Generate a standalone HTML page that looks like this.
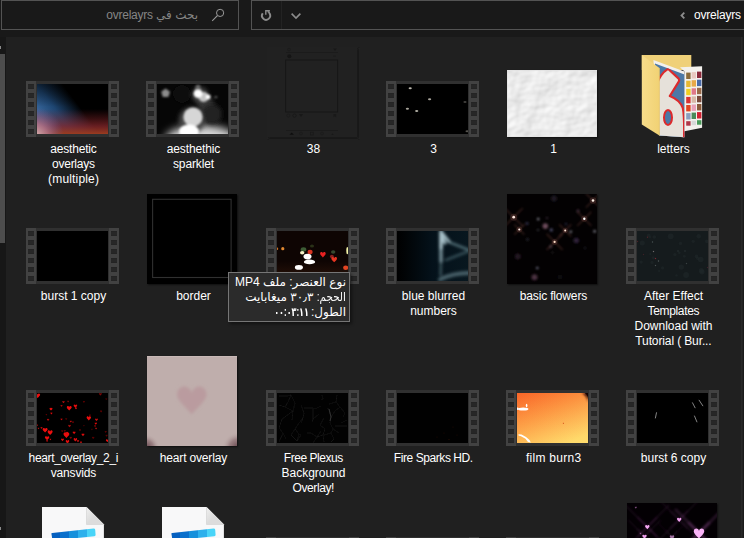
<!DOCTYPE html>
<html lang="ar"><head><meta charset="utf-8"><title>ovrelayrs</title>
<style>
html,body{margin:0;padding:0}
body{width:744px;height:538px;overflow:hidden;background:#191919;position:relative;font-family:"Liberation Sans","DejaVu Sans",sans-serif;font-size:12px;color:#fff}
#content{position:absolute;left:0;top:37px;width:744px;height:501px;background:#202020}
#strip{position:absolute;left:0;top:37px;width:6px;height:501px;background:#171717}
#thumb{position:absolute;left:0;top:54px;width:5px;height:189px;background:#4d4d4d}
.abs{position:absolute;display:block}
.box{position:absolute;box-sizing:border-box;border:1px solid #535353;background:#191919;height:30px;top:0}
.film{position:absolute;width:93px;height:56px;background:#303030}
.film::before,.film::after{content:"";position:absolute;top:0;width:10px;height:56px;
 background:linear-gradient(to bottom,#212121 0,#272727 1px,#272727 4px,#212121 5px,transparent 5px,transparent 9px) 2px 3px/6px 9px repeat-y,#424242}
.film::before{left:0}.film::after{right:0}
.pic{position:absolute;left:11px;top:3px;width:71px;height:50px;background:#000;overflow:hidden}
.pic svg,.sq svg{display:block}
.lbl{position:absolute;text-align:center;line-height:15px;font-size:12px;color:#fff;white-space:nowrap}
.sq{position:absolute;overflow:hidden;box-shadow:1px 1px 1.5px rgba(0,0,0,.55)}
#tip{position:absolute;left:228px;top:272px;width:122px;height:50px;box-sizing:border-box;border:1px solid #767676;background:#2b2b2b;color:#fff;direction:rtl;text-align:right;font-size:12px;line-height:15px;padding:2px 3px 0 0;white-space:nowrap;box-shadow:2px 2px 3px rgba(0,0,0,.45)}
#tip span{display:inline-block;transform-origin:100% 50%}
</style></head><body>
<div class="box" style="left:1px;width:238px"></div>
<div class="box" style="left:251px;width:500px"></div>
<div id="content"></div><div id="strip"></div><div id="thumb"></div>
<div class="abs" style="left:741px;top:37px;width:1px;height:501px;background:#282828"></div><div class="abs" style="left:742px;top:37px;width:1px;height:501px;background:#232323"></div><div class="abs" style="left:743px;top:37px;width:1px;height:501px;background:#1a1a1a"></div>
<div class="abs" style="left:0;top:46px;width:1px;height:3px;background:#8a8a8a"></div>
<div class="abs" style="left:0;top:527px;width:1px;height:3px;background:#8a8a8a"></div>
<div class="abs" style="left:106px;top:7px;width:92px;height:16px;line-height:16px;font-size:12px;color:#858585;direction:rtl;text-align:right;white-space:nowrap">بحث في <span style="letter-spacing:-.25px">ovrelayrs</span></div>
<svg class="abs" style="left:208px;top:6px" width="20" height="20" viewBox="0 0 20 20"><circle cx="12.1" cy="6.9" r="3.6" fill="none" stroke="#9a9a9a" stroke-width="1"/><path d="M9.4 9.6 L4.2 14.8" stroke="#9a9a9a" stroke-width="1.1" fill="none"/></svg>
<div class="abs" style="left:281px;top:1px;width:1px;height:28px;background:#232323"></div>
<svg class="abs" style="left:256px;top:6px" width="20" height="20" viewBox="0 0 20 20"><g fill="none" stroke="#8c8c8c"><path d="M11.6 5.6 Q13.2 5.6 13.6 7.6 A4.1 4.1 0 1 1 6.7 7.3" stroke-width="1.9"/><path d="M9.8 8.8 V4.7 H13.9" stroke-width="1.4"/></g></svg>
<svg class="abs" style="left:288px;top:8px" width="16" height="16" viewBox="0 0 16 16"><path d="M3.6 5.6 L8 10 L12.4 5.6" fill="none" stroke="#8c8c8c" stroke-width="1.6"/></svg>
<svg class="abs" style="left:676px;top:8px" width="14" height="16" viewBox="0 0 14 16"><path d="M8.3 4.7 L5.5 7.5 L8.3 10.3" fill="none" stroke="#8c8c8c" stroke-width="1.8"/></svg>
<div class="abs" style="left:694px;top:7px;height:16px;line-height:16px;font-size:12px;color:#fff;white-space:nowrap;letter-spacing:-.2px">ovrelayrs</div>
<div class="film" style="left:26px;top:81px"><div class="pic"><svg width="71" height="50" viewBox="0 0 71 50"><defs><linearGradient id="a1" gradientUnits="userSpaceOnUse" x1="-4" y1="24" x2="26" y2="1"><stop offset="0" stop-color="#3a6aa0"/><stop offset=".45" stop-color="#1e4672"/><stop offset="1" stop-color="#000"/></linearGradient>
<linearGradient id="a2" x1="0" y1="0" x2="0" y2="1"><stop offset=".5" stop-color="#701c20" stop-opacity="0"/><stop offset=".84" stop-color="#84262a" stop-opacity=".78"/><stop offset="1" stop-color="#9a3c20"/></linearGradient>
<radialGradient id="a3" gradientUnits="userSpaceOnUse" cx="-3" cy="53" r="30"><stop offset="0" stop-color="#e0c4bc"/><stop offset=".45" stop-color="#b88098" stop-opacity=".75"/><stop offset="1" stop-color="#6a5a96" stop-opacity="0"/></radialGradient>
<linearGradient id="a4" x1="0" y1="0" x2="0" y2="1"><stop offset="0" stop-color="#000" stop-opacity=".5"/><stop offset=".45" stop-color="#000" stop-opacity="0"/></linearGradient></defs><rect width="71" height="50" fill="#000"/><rect width="71" height="50" fill="url(#a1)"/><rect width="71" height="50" fill="url(#a4)"/><rect width="71" height="50" fill="url(#a2)"/><rect width="71" height="50" fill="url(#a3)"/></svg></div></div>
<div class="lbl" style="left:14.5px;top:142px;width:118px"><span style="letter-spacing:-0.16px;margin-right:0.16px">aesthetic</span><br><span style="letter-spacing:-0.26px;margin-right:0.26px">overlays</span><br><span style="letter-spacing:0.17px;margin-right:-0.17px">(multiple)</span></div>
<div class="film" style="left:146px;top:81px"><div class="pic"><svg width="71" height="50" viewBox="0 0 71 50"><defs><filter id="b1" x="-20%" y="-20%" width="140%" height="140%"><feGaussianBlur stdDeviation=".9"/></filter><filter id="b2" x="-30%" y="-60%" width="160%" height="220%"><feGaussianBlur stdDeviation="4.5"/></filter><filter id="b3" x="-40%" y="-40%" width="180%" height="180%"><feGaussianBlur stdDeviation="2.2"/></filter></defs><rect width="71" height="50" fill="#060606"/>
<ellipse cx="44" cy="56" rx="36" ry="15" fill="#d8d8d8" filter="url(#b2)"/>
<circle cx="25" cy="10" r="9" fill="#0b0b0b" filter="url(#b1)"/>
<circle cx="48.7" cy="20" r="8" fill="#343434" filter="url(#b3)"/>
<g filter="url(#b3)"><circle cx="43" cy="11" r="8" fill="#444"/><circle cx="35" cy="36" r="13" fill="#484848"/><circle cx="55" cy="30" r="10" fill="#242424"/></g>
<g filter="url(#b1)"><path d="M8.6 4.6 L13 7.8 L11.4 13 L5.8 13 L4.2 7.8Z" fill="#8c8c8c"/>
<circle cx="36" cy="33" r="9.6" fill="#d6d6d6"/>
<circle cx="46.6" cy="13" r="5" fill="#c4c4c4"/><circle cx="41" cy="9.5" r="4.4" fill="#fff"/><circle cx="51.2" cy="13" r="2.4" fill="#fff"/><circle cx="41" cy="3.4" r="2.6" fill="#6a6a6a"/>
<ellipse cx="32" cy="47.5" rx="10" ry="7" fill="#fff"/><rect x="57.6" y="12.6" width="2.6" height="1" fill="#bbb"/></g></svg></div></div>
<div class="lbl" style="left:134.5px;top:142px;width:118px"><span style="letter-spacing:-0.13px;margin-right:0.13px">aesthethic</span><br><span style="letter-spacing:-0.14px;margin-right:0.14px">sparklet</span></div>
<div class="sq" style="left:267px;top:47px;width:90px;height:90px;overflow:visible;box-shadow:none"><svg width="93" height="93" viewBox="0 0 93 93"><defs><filter id="s1"><feGaussianBlur stdDeviation=".8"/></filter></defs><rect x="1.2" y="1.2" width="90.6" height="90.6" fill="#191919" filter="url(#s1)"/><rect width="90" height="90" fill="#212121"/>
<rect x="18.6" y="13" width="52" height="52" fill="none" stroke="#171717" stroke-width="1"/>
<path d="M19 5.5H71M19 83.5H71" stroke="#1b1b1b" stroke-width="1"/>
<circle cx="22.3" cy="9.2" r="2" fill="#151515"/><circle cx="22" cy="2.6" r="1.4" fill="none" stroke="#1b1b1b" stroke-width=".8"/><path d="M66 1.5h4l-2 2.6z" fill="#191919"/><path d="M66 9.2h3" stroke="#1c1c1c"/>
<circle cx="21.3" cy="68.6" r="1.6" fill="none" stroke="#1a1a1a" stroke-width=".8"/><circle cx="27.5" cy="68.6" r="1.7" fill="none" stroke="#171717" stroke-width=".9"/><path d="M32 67h4l-2 3z" fill="#181818"/><path d="M66.5 67h2.6v3.2l-1.3-1-1.3 1z" fill="#191919"/>
<path d="M22.5 87.8l2.2-2.4 2.2 2.4z" fill="#0e0e0e"/><circle cx="34" cy="86.5" r="1.4" fill="none" stroke="#1a1a1a" stroke-width=".8"/><rect x="43.5" y="85.2" width="2.8" height="2.8" fill="none" stroke="#1a1a1a" stroke-width=".8"/><circle cx="55" cy="86.5" r="1.4" fill="none" stroke="#1a1a1a" stroke-width=".8"/><path d="M64.4 88q1.1-3 2.2 0z" fill="#181818"/></svg></div>
<div class="lbl" style="left:254.5px;top:142px;width:118px">38</div>
<div class="film" style="left:386px;top:81px"><div class="pic"><svg width="71" height="50" viewBox="0 0 71 50"><defs><filter id="c1"><feGaussianBlur stdDeviation=".45"/></filter></defs><rect width="71" height="50" fill="#000"/><g filter="url(#c1)"><ellipse cx="13.2" cy="4.3" rx="1.6" ry="1" fill="#bcb8ae" opacity="1"/><ellipse cx="32.6" cy="15.2" rx="1.6" ry="1" fill="#bcb8ae" opacity="0.9"/><ellipse cx="10.4" cy="24.7" rx="1.6" ry="1" fill="#bcb8ae" opacity="0.9"/><ellipse cx="19.7" cy="26.9" rx="1.6" ry="1" fill="#bcb8ae" opacity="0.95"/><ellipse cx="68" cy="17.9" rx="1.6" ry="1" fill="#bcb8ae" opacity="0.35"/><ellipse cx="70.1" cy="47.3" rx="1.6" ry="1" fill="#bcb8ae" opacity="0.45"/></g></svg></div></div>
<div class="lbl" style="left:374.5px;top:142px;width:118px">3</div>
<div class="sq" style="left:507px;top:70px;width:90px;height:67px;"><svg width="90" height="67" viewBox="0 0 90 67"><defs><filter id="p1" x="0" y="0" width="100%" height="100%" color-interpolation-filters="sRGB"><feTurbulence type="fractalNoise" baseFrequency=".045 .055" numOctaves="3" seed="7" result="n"/><feDiffuseLighting in="n" lighting-color="#fff" surfaceScale="1.0" diffuseConstant="1.035"><feDistantLight azimuth="225" elevation="63"/></feDiffuseLighting></filter></defs><rect width="90" height="67" fill="#ececec"/><rect width="90" height="67" filter="url(#p1)"/>
<rect x="0" y="0" width="90" height="67" fill="none" stroke="#dedede" stroke-width="1"/></svg></div>
<div class="lbl" style="left:494.5px;top:142px;width:118px">1</div>
<svg class="abs" style="left:638px;top:50px" width="70" height="92" viewBox="0 0 70 92"><defs><linearGradient id="fg1" x1="0" y1="0" x2="1" y2="0"><stop offset="0" stop-color="#f7dc8a"/><stop offset="1" stop-color="#f1d274"/></linearGradient><filter id="fb"><feGaussianBlur stdDeviation=".5"/></filter><clipPath id="fc"><path d="M17 13.4 L46.5 24.6 V87.2 L21.4 85.5Z"/></clipPath></defs>
<path d="M3.8 5.1H53.3V20H3.8Z" fill="#efd078"/>
<path d="M15.4 9.9 L46.5 21.4 V87.2 L21.4 85.5Z" fill="#f2f0ee"/>
<path d="M17 13.4 L46.5 24.6 V87.2 L21.4 85.5Z" fill="#4c78a6"/>
<g clip-path="url(#fc)"><path d="M19 34 Q22 24 30 18.8 L40.4 28.4 Q41.8 30 40.6 31.8 L31.8 46 Q42 50 44.8 58 Q46.6 66 46 92 L19 92Z" fill="#e6e1da" stroke="#dc2a2c" stroke-width="2.2" stroke-linejoin="round"/>
<ellipse cx="30" cy="67.5" rx="4" ry="7.4" fill="#4c78a6" stroke="#dc2a2c" stroke-width="2"/></g>
<path d="M42 17.2 L64.1 16.2 V77.8 L46.5 81.2 V21.4Z" fill="#f3f1ed"/>
<g filter="url(#fb)"><rect x="48.2" y="22.6" width="4.4" height="6.4" fill="#8a6a3a"/><rect x="53.6" y="22.1" width="4.4" height="6.4" fill="#e8c8c0"/><rect x="59.0" y="21.6" width="4.4" height="6.4" fill="#8a2a3a"/><rect x="48.2" y="30.7" width="4.4" height="6.4" fill="#e8b830"/><rect x="53.6" y="30.2" width="4.4" height="6.4" fill="#e8a848"/><rect x="59.0" y="29.7" width="4.4" height="6.4" fill="#4a6aa8"/><rect x="48.2" y="38.8" width="4.4" height="6.4" fill="#f0d020"/><rect x="53.6" y="38.3" width="4.4" height="6.4" fill="#e07888"/><rect x="59.0" y="37.8" width="4.4" height="6.4" fill="#9a6a4a"/><rect x="48.2" y="46.9" width="4.4" height="6.4" fill="#d83030"/><rect x="53.6" y="46.4" width="4.4" height="6.4" fill="#d8b8a8"/><rect x="59.0" y="45.9" width="4.4" height="6.4" fill="#7a4a3a"/><rect x="48.2" y="55.0" width="4.4" height="6.4" fill="#e04420"/><rect x="53.6" y="54.5" width="4.4" height="6.4" fill="#e8a0b8"/><rect x="59.0" y="54.0" width="4.4" height="6.4" fill="#8a5a3a"/><rect x="48.2" y="63.1" width="4.4" height="6.4" fill="#8aa0c0"/><rect x="53.6" y="62.6" width="4.4" height="6.4" fill="#4a8a5a"/><rect x="59.0" y="62.1" width="4.4" height="6.4" fill="#d02030"/><rect x="48.2" y="71.2" width="4.4" height="4.5" fill="#b03848"/><rect x="53.6" y="70.7" width="4.4" height="4.5" fill="#d8d8d8"/><rect x="59.0" y="70.2" width="4.4" height="4.5" fill="#4a9a5a"/></g>
<path d="M3.8 5.1 L21.4 18 V85.5 L3.8 74.4Z" fill="url(#fg1)"/><path d="M21.4 18V85.5" stroke="#e4c468" stroke-width=".7"/></svg>
<div class="lbl" style="left:614.5px;top:142px;width:118px">letters</div>
<div class="film" style="left:26px;top:228px"><div class="pic"><svg width="71" height="50" viewBox="0 0 71 50"><rect width="71" height="50" fill="#000"/></svg></div></div>
<div class="lbl" style="left:14.5px;top:289px;width:118px">burst 1 copy</div>
<div class="sq" style="left:147px;top:194px;width:90px;height:90px;"><svg width="90" height="90" viewBox="0 0 90 90"><rect width="90" height="90" fill="#000"/><rect x="5.6" y="5.3" width="78.5" height="78.2" fill="none" stroke="#303030" stroke-width="1.1"/></svg></div>
<div class="lbl" style="left:134.5px;top:289px;width:118px">border</div>
<div class="film" style="left:266px;top:228px"><div class="pic"><svg width="71" height="50" viewBox="0 0 71 50"><defs><filter id="k1"><feGaussianBlur stdDeviation=".75"/></filter><linearGradient id="k2" x1="0" y1="0" x2="0" y2="1"><stop offset="0" stop-color="#2a1208" stop-opacity="0"/><stop offset="1" stop-color="#2e160a"/></linearGradient></defs><rect width="71" height="50" fill="#0e0503"/><rect y="30" width="71" height="20" fill="url(#k2)"/><g filter="url(#k1)"><ellipse cx="5.8" cy="17.7" rx="1.6" ry="1.6" fill="#e08830"/><ellipse cx="0.2" cy="17.7" rx="1" ry="1.2" fill="#d07020"/><ellipse cx="26.5" cy="18.4" rx="2.8" ry="2.2" fill="#3c5c34"/><ellipse cx="25.2" cy="21.7" rx="2.2" ry="1.8" fill="#f4f4c8"/><ellipse cx="33.1" cy="21" rx="2.6" ry="2.2" fill="#d83424"/><ellipse cx="30.5" cy="25.6" rx="4" ry="2.8" fill="#fff"/><ellipse cx="32.5" cy="30.9" rx="5.6" ry="2.4" fill="#fff"/><ellipse cx="21.9" cy="36.4" rx="4" ry="2.4" fill="#fff"/><ellipse cx="56.2" cy="21" rx="2.2" ry="1.8" fill="#36482f"/><ellipse cx="54.9" cy="25.6" rx="2" ry="1.8" fill="#8c2020"/><ellipse cx="70.3" cy="19.7" rx="1" ry="3.6" fill="#f4f4a8"/><ellipse cx="68.7" cy="36.8" rx="2.6" ry="2.2" fill="#e44422"/><ellipse cx="35" cy="15" rx="2" ry="1.6" fill="#2a3018"/><path d="M45.9 26.4 C44.5 24.9 42.8 23.5 43.1 22.3 C43.4 20.7 45.5 20.7 45.9 22.3 C46.3 20.7 48.4 20.7 48.7 22.3 C49.0 23.5 47.3 24.9 45.9 26.4Z" fill="#e82020"/><path d="M57.2 31.3 C55.8 29.8 54.1 28.4 54.4 27.2 C54.7 25.6 56.8 25.6 57.2 27.2 C57.6 25.6 59.7 25.6 60.0 27.2 C60.3 28.4 58.6 29.8 57.2 31.3Z" fill="#e83420"/></g></svg></div></div>
<div class="film" style="left:386px;top:228px"><div class="pic"><svg width="71" height="50" viewBox="0 0 71 50"><defs><filter id="u1" x="-20%" y="-20%" width="140%" height="140%"><feGaussianBlur stdDeviation="1.4"/></filter><linearGradient id="u2" x1="0" y1="0" x2="1" y2="0"><stop offset="0" stop-color="#000"/><stop offset=".12" stop-color="#010406"/><stop offset=".5" stop-color="#04111a"/><stop offset="1" stop-color="#08171f"/></linearGradient></defs><rect width="71" height="50" fill="url(#u2)"/><g filter="url(#u1)" fill="none" stroke-linecap="round">
<path d="M72 19 L53 11.5" stroke="#5a7880" stroke-width="2.4"/><path d="M72 20 L49 29" stroke="#3c5860" stroke-width="2.4"/>
<path d="M43 48.5 Q56 42 72 42" stroke="#4a626a" stroke-width="4"/><path d="M44 30 L43.6 44" stroke="#3a525a" stroke-width="2.5"/>
<path d="M43.8 0 L44 30" stroke="#7c969e" stroke-width="3.2"/><path d="M44 2 L44.2 17" stroke="#b4ccd4" stroke-width="2.8"/><path d="M44.5 1 L52 10.5" stroke="#a4bec6" stroke-width="2.8"/><path d="M45 5 L48 12" stroke="#a8c2ca" stroke-width="3"/></g></svg></div></div>
<div class="lbl" style="left:374.5px;top:289px;width:118px">blue blurred<br>numbers</div>
<div class="sq" style="left:507px;top:194px;width:90px;height:90px;"><svg width="90" height="90" viewBox="0 0 90 90"><defs><filter id="f1"><feGaussianBlur stdDeviation=".55"/></filter><filter id="f2"><feGaussianBlur stdDeviation=".9"/></filter></defs><rect width="90" height="90" fill="#030102"/><g filter="url(#f2)"><path d="M-2.3 14.2L15.7 32.2M-2.3 32.2L15.7 14.2" stroke="#8a5048" stroke-width="1.5" opacity=".34"/><path d="M7.300000000000001 30.5L17.3 40.5M7.300000000000001 40.5L17.3 30.5" stroke="#8a5048" stroke-width="1.5" opacity=".34"/><path d="M79 -0.5L93 13.5M79 13.5L93 -0.5" stroke="#8a5048" stroke-width="1.5" opacity=".34"/><path d="M70.3 17.7L84.3 31.7M70.3 31.7L84.3 17.7" stroke="#8a5048" stroke-width="1.5" opacity=".34"/><path d="M52.2 30.4L64.2 42.4M52.2 42.4L64.2 30.4" stroke="#8a5048" stroke-width="1.5" opacity=".34"/><path d="M39.6 39.9L55.6 55.9M39.6 55.9L55.6 39.9" stroke="#8a5048" stroke-width="1.5" opacity=".34"/><circle cx="38.3" cy="32.1" r="2.8" fill="#6a4a5a"/><circle cx="31.2" cy="25.1" r="1.3" fill="#7a7a84"/><circle cx="44.3" cy="35.9" r="1.7" fill="#4a4a66"/><circle cx="63.8" cy="37.7" r="1.3" fill="#77777f"/><circle cx="87.6" cy="37.2" r="1.5" fill="#66666e"/><circle cx="30.3" cy="74" r="1.3" fill="#66667a"/><circle cx="27.5" cy="83.3" r="3" fill="#4a3040"/><circle cx="10.8" cy="62.4" r="3" fill="#221820"/><circle cx="69.3" cy="46.5" r="2.8" fill="#2e2038"/><circle cx="43.7" cy="52.6" r="1.5" fill="#4c3c44"/><circle cx="47" cy="4.6" r="3" fill="#1e1620"/><circle cx="20" cy="29.4" r="1.6" fill="#2a2a40"/><circle cx="31" cy="36" r="1.1" fill="#3a3a44"/><circle cx="71" cy="17" r="1.7" fill="#3a2a30"/><circle cx="59" cy="30" r="1.1" fill="#2a2a50"/><circle cx="20.5" cy="45.5" r="1.4" fill="#22222e"/><circle cx="78" cy="54" r="1.1" fill="#22222a"/><circle cx="53" cy="83" r="2" fill="#14141c"/><circle cx="45.5" cy="58.5" r="0.8" fill="#444"/><circle cx="40" cy="24" r="1" fill="#3a3038"/></g><g filter="url(#f1)"><circle cx="6.7" cy="23.2" r="3.5" fill="#7a4a44" opacity=".32"/><circle cx="6.7" cy="23.2" r="1.36" fill="#ffe8e0"/><circle cx="12.3" cy="35.5" r="2.9" fill="#7a4a44" opacity=".32"/><circle cx="12.3" cy="35.5" r="1.10" fill="#fff0e8"/><circle cx="86" cy="6.5" r="3.3" fill="#7a4a44" opacity=".32"/><circle cx="86" cy="6.5" r="1.27" fill="#fff4e8"/><circle cx="77.3" cy="24.7" r="3.1" fill="#7a4a44" opacity=".32"/><circle cx="77.3" cy="24.7" r="1.19" fill="#fff"/><circle cx="58.2" cy="36.4" r="2.6" fill="#7a4a44" opacity=".32"/><circle cx="58.2" cy="36.4" r="1.02" fill="#ffe8d8"/><circle cx="47.6" cy="47.9" r="2.9" fill="#7a4a44" opacity=".32"/><circle cx="47.6" cy="47.9" r="1.10" fill="#ffe0c8"/></g></svg></div>
<div class="lbl" style="left:494.5px;top:289px;width:118px"><span style="letter-spacing:-0.16px;margin-right:0.16px">basic flowers</span></div>
<div class="film" style="left:626px;top:228px"><div class="pic"><svg width="71" height="50" viewBox="0 0 71 50"><rect width="71" height="50" fill="#151b1d"/><circle cx="17.3" cy="6.0" r="1.8" fill="#20282a" opacity=".6"/><circle cx="11.7" cy="4.2" r="1.8" fill="#20282a" opacity=".6"/><circle cx="64.3" cy="39.4" r="2.5" fill="#20282a" opacity=".6"/><circle cx="16.3" cy="26.8" r="1.6" fill="#20282a" opacity=".6"/><circle cx="12.9" cy="6.1" r="1.4" fill="#20282a" opacity=".6"/><circle cx="65.0" cy="40.8" r="2.6" fill="#20282a" opacity=".6"/><circle cx="56.2" cy="10.3" r="1.6" fill="#20282a" opacity=".6"/><circle cx="44.3" cy="36.1" r="2.7" fill="#20282a" opacity=".6"/><circle cx="61.7" cy="5.2" r="2.2" fill="#20282a" opacity=".6"/><circle cx="47.3" cy="25.3" r="1.4" fill="#20282a" opacity=".6"/><circle cx="33.7" cy="5.3" r="2.9" fill="#20282a" opacity=".6"/><circle cx="60.7" cy="27.3" r="1.6" fill="#20282a" opacity=".6"/><circle cx="63.7" cy="28.5" r="2.8" fill="#20282a" opacity=".6"/><circle cx="59.5" cy="25.4" r="1.8" fill="#20282a" opacity=".6"/><circle cx="42.3" cy="21.7" r="1.3" fill="#20282a" opacity=".6"/><circle cx="22.1" cy="40.0" r="1.1" fill="#20282a" opacity=".6"/><circle cx="4.2" cy="31.1" r="1.6" fill="#20282a" opacity=".6"/><circle cx="37.9" cy="23.6" r="1.7" fill="#20282a" opacity=".6"/><circle cx="69.8" cy="10.4" r="1.8" fill="#20282a" opacity=".6"/><circle cx="15.0" cy="31.4" r="1.6" fill="#20282a" opacity=".6"/><circle cx="25.6" cy="36.9" r="1.6" fill="#20282a" opacity=".6"/><circle cx="39.5" cy="44.4" r="1.2" fill="#20282a" opacity=".6"/><circle cx="5.3" cy="12.0" r="2.5" fill="#20282a" opacity=".6"/><circle cx="43.5" cy="12.4" r="1.7" fill="#20282a" opacity=".6"/><circle cx="13.3" cy="23.0" r="1.1" fill="#20282a" opacity=".6"/><circle cx="49.1" cy="44.0" r="2.9" fill="#20282a" opacity=".6"/><rect x="15.9" y="19.9" width="1.2" height="1.2" fill="#8a8484" opacity=".75"/><rect x="14.9" y="10.4" width="1.2" height="1.2" fill="#5a6a6a" opacity=".75"/><rect x="20.9" y="29.4" width="1.2" height="1.2" fill="#6a7474" opacity=".75"/><rect x="17.9" y="33.9" width="1.2" height="1.2" fill="#5a6464" opacity=".75"/><rect x="40.4" y="19.4" width="1.2" height="1.2" fill="#3a4444" opacity=".75"/><rect x="47.4" y="19.4" width="1.2" height="1.2" fill="#3a4444" opacity=".75"/><rect x="48.9" y="31.9" width="1.2" height="1.2" fill="#444e4e" opacity=".75"/><rect x="17.9" y="26.9" width="1.2" height="1.2" fill="#9a3038" opacity=".75"/><rect x="9.9" y="5.6" width="1.2" height="1.2" fill="#6a2830" opacity=".75"/><rect x="5.9" y="22.9" width="1.2" height="1.2" fill="#4a2428" opacity=".75"/><rect x="-0.1" y="9.9" width="1.2" height="1.2" fill="#5a2428" opacity=".75"/><rect x="69.9" y="35.9" width="1.2" height="1.2" fill="#4a2430" opacity=".75"/></svg></div></div>
<div class="lbl" style="left:614.5px;top:289px;width:118px">After Effect<br><span style="letter-spacing:-0.33px;margin-right:0.33px">Templates</span><br>Download with<br><span style="letter-spacing:-0.12px;margin-right:0.12px">Tutorial ( Bur...</span></div>
<div class="film" style="left:26px;top:390px"><div class="pic"><svg width="71" height="50" viewBox="0 0 71 50"><defs><filter id="h1"><feGaussianBlur stdDeviation=".3"/></filter></defs><rect width="71" height="50" fill="#000"/><g filter="url(#h1)"><path d="M0.6 5.1 C-0.6 3.7 -2.1 2.5 -1.9 1.5 C-1.6 0.0 0.2 0.0 0.6 1.5 C1.0 0.0 2.8 0.0 3.1 1.5 C3.3 2.5 1.8 3.7 0.6 5.1Z" fill="#ee1010"/><path d="M63.4 2.7 C62.7 1.9 61.8 1.1 61.9 0.5 C62.1 -0.3 63.2 -0.3 63.4 0.5 C63.6 -0.3 64.7 -0.3 64.9 0.5 C65.0 1.1 64.1 1.9 63.4 2.7Z" fill="#ee1010" opacity="0.5"/><path d="M26.5 10.1 C25.9 9.4 25.2 8.8 25.3 8.4 C25.4 7.7 26.3 7.7 26.5 8.4 C26.7 7.7 27.6 7.7 27.7 8.4 C27.8 8.8 27.1 9.4 26.5 10.1Z" fill="#ee1010" opacity="0.8"/><path d="M31.1 9.5 C30.6 8.9 30.0 8.5 30.1 8.1 C30.2 7.5 31.0 7.5 31.1 8.1 C31.2 7.5 32.0 7.5 32.1 8.1 C32.2 8.5 31.6 8.9 31.1 9.5Z" fill="#ee1010" opacity="0.5"/><path d="M46.9 9.8 C46.4 9.2 45.8 8.8 45.9 8.4 C46.0 7.8 46.8 7.8 46.9 8.4 C47.0 7.8 47.8 7.8 47.9 8.4 C48.0 8.8 47.4 9.2 46.9 9.8Z" fill="#ee1010" opacity="0.4"/><path d="M38.4 14.9 C37.5 13.9 36.5 13.0 36.6 12.3 C36.8 11.2 38.1 11.2 38.4 12.3 C38.7 11.2 40.0 11.2 40.2 12.3 C40.3 13.0 39.3 13.9 38.4 14.9Z" fill="#ee1010" opacity="0.95"/><path d="M32.2 17.6 C31.0 16.2 29.5 15.0 29.8 14.0 C30.0 12.5 31.8 12.5 32.2 14.0 C32.6 12.5 34.4 12.5 34.7 14.0 C34.9 15.0 33.4 16.2 32.2 17.6Z" fill="#ee1010"/><path d="M39.0 16.3 C38.5 15.7 37.9 15.3 38.0 14.9 C38.1 14.3 38.9 14.3 39.0 14.9 C39.1 14.3 39.9 14.3 40.0 14.9 C40.1 15.3 39.5 15.7 39.0 16.3Z" fill="#ee1010" opacity="0.9"/><path d="M24.5 13.8 C24.0 13.2 23.4 12.8 23.5 12.4 C23.6 11.8 24.4 11.8 24.5 12.4 C24.6 11.8 25.4 11.8 25.5 12.4 C25.6 12.8 25.0 13.2 24.5 13.8Z" fill="#ee1010" opacity="0.7"/><path d="M14.0 17.6 C13.3 16.8 12.4 16.0 12.5 15.4 C12.7 14.6 13.8 14.6 14.0 15.4 C14.2 14.6 15.3 14.6 15.5 15.4 C15.6 16.0 14.7 16.8 14.0 17.6Z" fill="#ee1010"/><path d="M14.4 21.4 C13.9 20.8 13.3 20.4 13.4 20.0 C13.5 19.4 14.3 19.4 14.4 20.0 C14.5 19.4 15.3 19.4 15.4 20.0 C15.5 20.4 14.9 20.8 14.4 21.4Z" fill="#ee1010" opacity="0.9"/><path d="M9.4 22.5 C9.0 22.1 8.5 21.7 8.6 21.3 C8.7 20.9 9.3 20.9 9.4 21.3 C9.5 20.9 10.1 20.9 10.2 21.3 C10.3 21.7 9.8 22.1 9.4 22.5Z" fill="#ee1010" opacity="0.4"/><path d="M11.1 27.9 C10.5 27.2 9.8 26.6 9.9 26.2 C10.0 25.5 10.9 25.5 11.1 26.2 C11.3 25.5 12.2 25.5 12.3 26.2 C12.4 26.6 11.7 27.2 11.1 27.9Z" fill="#ee1010" opacity="0.7"/><path d="M24.5 27.3 C24.0 26.7 23.4 26.3 23.5 25.9 C23.6 25.3 24.4 25.3 24.5 25.9 C24.6 25.3 25.4 25.3 25.5 25.9 C25.6 26.3 25.0 26.7 24.5 27.3Z" fill="#ee1010" opacity="0.8"/><path d="M29.2 27.0 C28.7 26.4 28.1 26.0 28.2 25.6 C28.3 25.0 29.1 25.0 29.2 25.6 C29.3 25.0 30.1 25.0 30.2 25.6 C30.3 26.0 29.7 26.4 29.2 27.0Z" fill="#ee1010" opacity="0.4"/><path d="M33.8 29.5 C33.3 28.9 32.7 28.5 32.8 28.1 C32.9 27.5 33.7 27.5 33.8 28.1 C33.9 27.5 34.7 27.5 34.8 28.1 C34.9 28.5 34.3 28.9 33.8 29.5Z" fill="#ee1010" opacity="0.8"/><path d="M36.0 30.1 C35.6 29.7 35.1 29.3 35.2 28.9 C35.3 28.5 35.9 28.5 36.0 28.9 C36.1 28.5 36.7 28.5 36.8 28.9 C36.9 29.3 36.4 29.7 36.0 30.1Z" fill="#ee1010" opacity="0.7"/><path d="M32.5 34.2 C31.9 33.5 31.1 32.8 31.2 32.3 C31.4 31.6 32.3 31.6 32.5 32.3 C32.7 31.6 33.6 31.6 33.8 32.3 C33.9 32.8 33.1 33.5 32.5 34.2Z" fill="#ee1010" opacity="0.7"/><path d="M51.8 27.4 C50.7 26.2 49.4 25.1 49.6 24.2 C49.9 22.9 51.5 22.9 51.8 24.2 C52.1 22.9 53.7 22.9 54.0 24.2 C54.2 25.1 52.9 26.2 51.8 27.4Z" fill="#ee1010"/><path d="M52.9 23.3 C52.4 22.7 51.8 22.3 51.9 21.9 C52.0 21.3 52.8 21.3 52.9 21.9 C53.0 21.3 53.8 21.3 53.9 21.9 C54.0 22.3 53.4 22.7 52.9 23.3Z" fill="#ee1010" opacity="0.4"/><path d="M59.5 28.2 C58.8 27.4 57.9 26.6 58.0 26.0 C58.2 25.2 59.3 25.2 59.5 26.0 C59.7 25.2 60.8 25.2 61.0 26.0 C61.1 26.6 60.2 27.4 59.5 28.2Z" fill="#ee1010" opacity="0.8"/><path d="M58.8 31.7 C58.2 31.0 57.5 30.4 57.6 30.0 C57.7 29.3 58.6 29.3 58.8 30.0 C59.0 29.3 59.9 29.3 60.0 30.0 C60.1 30.4 59.4 31.0 58.8 31.7Z" fill="#ee1010" opacity="0.9"/><path d="M58.1 34.1 C57.6 33.5 57.0 33.1 57.1 32.7 C57.2 32.1 58.0 32.1 58.1 32.7 C58.2 32.1 59.0 32.1 59.1 32.7 C59.2 33.1 58.6 33.5 58.1 34.1Z" fill="#ee1010" opacity="0.6"/><path d="M59.1 36.5 C58.6 35.9 58.0 35.5 58.1 35.1 C58.2 34.5 59.0 34.5 59.1 35.1 C59.2 34.5 60.0 34.5 60.1 35.1 C60.2 35.5 59.6 35.9 59.1 36.5Z" fill="#ee1010" opacity="0.7"/><path d="M64.1 19.4 C63.6 18.8 63.0 18.4 63.1 18.0 C63.2 17.4 64.0 17.4 64.1 18.0 C64.2 17.4 65.0 17.4 65.1 18.0 C65.2 18.4 64.6 18.8 64.1 19.4Z" fill="#ee1010" opacity="0.45"/><path d="M69.3 7.1 C68.8 6.5 68.2 6.1 68.3 5.7 C68.4 5.1 69.2 5.1 69.3 5.7 C69.4 5.1 70.2 5.1 70.3 5.7 C70.4 6.1 69.8 6.5 69.3 7.1Z" fill="#ee1010" opacity="0.3"/><path d="M8.1 39.6 C6.9 38.2 5.4 37.0 5.6 36.0 C5.9 34.5 7.7 34.5 8.1 36.0 C8.5 34.5 10.3 34.5 10.6 36.0 C10.8 37.0 9.3 38.2 8.1 39.6Z" fill="#ee1010"/><path d="M13.1 42.0 C11.9 40.6 10.4 39.4 10.6 38.4 C10.9 36.9 12.7 36.9 13.1 38.4 C13.5 36.9 15.3 36.9 15.6 38.4 C15.8 39.4 14.3 40.6 13.1 42.0Z" fill="#ee1010"/><path d="M4.5 35.8 C4.0 35.2 3.4 34.8 3.5 34.4 C3.6 33.8 4.4 33.8 4.5 34.4 C4.6 33.8 5.4 33.8 5.5 34.4 C5.6 34.8 5.0 35.2 4.5 35.8Z" fill="#ee1010" opacity="0.8"/><path d="M1.5 36.3 C1.1 35.9 0.6 35.5 0.7 35.1 C0.8 34.7 1.4 34.7 1.5 35.1 C1.6 34.7 2.2 34.7 2.3 35.1 C2.4 35.5 1.9 35.9 1.5 36.3Z" fill="#ee1010" opacity="0.8"/><path d="M10.1 47.3 C9.0 46.1 7.7 45.0 7.9 44.1 C8.2 42.8 9.8 42.8 10.1 44.1 C10.4 42.8 12.0 42.8 12.3 44.1 C12.5 45.0 11.2 46.1 10.1 47.3Z" fill="#ee1010"/><path d="M10.1 49.0 C9.6 48.4 9.0 48.0 9.1 47.6 C9.2 47.0 10.0 47.0 10.1 47.6 C10.2 47.0 11.0 47.0 11.1 47.6 C11.2 48.0 10.6 48.4 10.1 49.0Z" fill="#ee1010" opacity="0.8"/><path d="M13.4 47.2 C13.0 46.8 12.5 46.4 12.6 46.0 C12.7 45.6 13.3 45.6 13.4 46.0 C13.5 45.6 14.1 45.6 14.2 46.0 C14.3 46.4 13.8 46.8 13.4 47.2Z" fill="#ee1010" opacity="0.9"/><path d="M29.4 45.0 C27.9 43.4 26.2 42.0 26.5 40.8 C26.8 39.0 29.0 39.0 29.4 40.8 C29.8 39.0 32.0 39.0 32.3 40.8 C32.6 42.0 30.9 43.4 29.4 45.0Z" fill="#ee1010"/><path d="M29.8 41.1 C29.2 40.4 28.4 39.7 28.5 39.2 C28.7 38.5 29.6 38.5 29.8 39.2 C30.0 38.5 30.9 38.5 31.1 39.2 C31.2 39.7 30.4 40.4 29.8 41.1Z" fill="#ee1010" opacity="0.9"/><path d="M25.2 39.1 C24.7 38.5 24.1 38.1 24.2 37.7 C24.3 37.1 25.1 37.1 25.2 37.7 C25.3 37.1 26.1 37.1 26.2 37.7 C26.3 38.1 25.7 38.5 25.2 39.1Z" fill="#ee1010" opacity="0.45"/><path d="M27.8 38.9 C27.3 38.3 26.7 37.9 26.8 37.5 C26.9 36.9 27.7 36.9 27.8 37.5 C27.9 36.9 28.7 36.9 28.8 37.5 C28.9 37.9 28.3 38.3 27.8 38.9Z" fill="#ee1010" opacity="0.45"/><path d="M37.1 41.2 C36.4 40.4 35.5 39.6 35.6 39.0 C35.8 38.2 36.9 38.2 37.1 39.0 C37.3 38.2 38.4 38.2 38.6 39.0 C38.7 39.6 37.8 40.4 37.1 41.2Z" fill="#ee1010" opacity="0.9"/><path d="M43.0 38.2 C42.5 37.6 41.9 37.2 42.0 36.8 C42.1 36.2 42.9 36.2 43.0 36.8 C43.1 36.2 43.9 36.2 44.0 36.8 C44.1 37.2 43.5 37.6 43.0 38.2Z" fill="#ee1010" opacity="0.4"/><path d="M46.0 43.2 C45.3 42.4 44.4 41.6 44.5 41.0 C44.7 40.2 45.8 40.2 46.0 41.0 C46.2 40.2 47.3 40.2 47.5 41.0 C47.6 41.6 46.7 42.4 46.0 43.2Z" fill="#ee1010" opacity="0.9"/><path d="M33.8 45.9 C33.2 45.2 32.5 44.6 32.6 44.2 C32.7 43.5 33.6 43.5 33.8 44.2 C34.0 43.5 34.9 43.5 35.0 44.2 C35.1 44.6 34.4 45.2 33.8 45.9Z" fill="#ee1010" opacity="0.5"/><path d="M25.5 48.2 C24.8 47.4 23.9 46.6 24.0 46.0 C24.2 45.2 25.3 45.2 25.5 46.0 C25.7 45.2 26.8 45.2 27.0 46.0 C27.1 46.6 26.2 47.4 25.5 48.2Z" fill="#ee1010" opacity="0.9"/><path d="M30.5 50.5 C29.6 49.5 28.6 48.6 28.7 47.9 C28.9 46.8 30.2 46.8 30.5 47.9 C30.8 46.8 32.1 46.8 32.3 47.9 C32.4 48.6 31.4 49.5 30.5 50.5Z" fill="#ee1010" opacity="0.95"/><path d="M38.4 48.5 C37.5 47.5 36.5 46.6 36.6 45.9 C36.8 44.8 38.1 44.8 38.4 45.9 C38.7 44.8 40.0 44.8 40.2 45.9 C40.3 46.6 39.3 47.5 38.4 48.5Z" fill="#ee1010" opacity="0.9"/><path d="M41.0 49.2 C40.4 48.5 39.7 47.9 39.8 47.5 C39.9 46.8 40.8 46.8 41.0 47.5 C41.2 46.8 42.1 46.8 42.2 47.5 C42.3 47.9 41.6 48.5 41.0 49.2Z" fill="#ee1010" opacity="0.8"/><path d="M44.0 50.3 C43.5 49.7 42.9 49.3 43.0 48.9 C43.1 48.3 43.9 48.3 44.0 48.9 C44.1 48.3 44.9 48.3 45.0 48.9 C45.1 49.3 44.5 49.7 44.0 50.3Z" fill="#ee1010" opacity="0.9"/><path d="M56.2 45.9 C55.6 45.2 54.9 44.6 55.0 44.2 C55.1 43.5 56.0 43.5 56.2 44.2 C56.4 43.5 57.3 43.5 57.4 44.2 C57.5 44.6 56.8 45.2 56.2 45.9Z" fill="#ee1010" opacity="0.4"/><path d="M68.7 39.8 C68.2 39.2 67.6 38.8 67.7 38.4 C67.8 37.8 68.6 37.8 68.7 38.4 C68.8 37.8 69.6 37.8 69.7 38.4 C69.8 38.8 69.2 39.2 68.7 39.8Z" fill="#ee1010" opacity="0.4"/><path d="M69.6 43.7 C69.1 43.1 68.5 42.7 68.6 42.3 C68.7 41.7 69.5 41.7 69.6 42.3 C69.7 41.7 70.5 41.7 70.6 42.3 C70.7 42.7 70.1 43.1 69.6 43.7Z" fill="#ee1010" opacity="0.4"/><path d="M70.4 49.1 C69.7 48.3 68.8 47.5 68.9 46.9 C69.1 46.1 70.2 46.1 70.4 46.9 C70.6 46.1 71.7 46.1 71.9 46.9 C72.0 47.5 71.1 48.3 70.4 49.1Z" fill="#ee1010"/><path d="M54.9 37.2 C54.5 36.8 54.0 36.4 54.1 36.0 C54.2 35.6 54.8 35.6 54.9 36.0 C55.0 35.6 55.6 35.6 55.7 36.0 C55.8 36.4 55.3 36.8 54.9 37.2Z" fill="#ee1010" opacity="0.35"/><path d="M46.9 33.4 C46.5 33.0 46.0 32.6 46.1 32.2 C46.2 31.8 46.8 31.8 46.9 32.2 C47.0 31.8 47.6 31.8 47.7 32.2 C47.8 32.6 47.3 33.0 46.9 33.4Z" fill="#ee1010" opacity="0.3"/><path d="M0.3 33.1 C-0.1 32.7 -0.6 32.3 -0.5 31.9 C-0.4 31.5 0.2 31.5 0.3 31.9 C0.4 31.5 1.0 31.5 1.1 31.9 C1.2 32.3 0.7 32.7 0.3 33.1Z" fill="#ee1010" opacity="0.7"/></g></svg></div></div>
<div class="lbl" style="left:14.5px;top:451px;width:118px"><span style="letter-spacing:-0.35px;margin-right:0.35px">heart_overlay_2_i</span><br><span style="letter-spacing:-0.19px;margin-right:0.19px">vansvids</span></div>
<div class="sq" style="left:147px;top:356px;width:90px;height:90px;"><svg width="90" height="90" viewBox="0 0 90 90"><defs><filter id="o1" x="-30%" y="-30%" width="160%" height="160%"><feGaussianBlur stdDeviation="1.5"/></filter><radialGradient id="o2" gradientUnits="userSpaceOnUse" cx="-1" cy="92" r="14"><stop offset="0" stop-color="#5c3c44"/><stop offset=".55" stop-color="#8a6c70" stop-opacity=".7"/><stop offset="1" stop-color="#bfaeac" stop-opacity="0"/></radialGradient><radialGradient id="o3" gradientUnits="userSpaceOnUse" cx="91" cy="92" r="16"><stop offset="0" stop-color="#5c3c44"/><stop offset=".55" stop-color="#8a6c70" stop-opacity=".7"/><stop offset="1" stop-color="#bfaeac" stop-opacity="0"/></radialGradient></defs><rect width="90" height="90" fill="#bfaeac"/><rect width="90" height="90" fill="url(#o2)"/><rect width="90" height="90" fill="url(#o3)"/><g filter="url(#o1)"><path d="M44.8 58.2 C37.5 50.2 28.7 42.9 30.2 37.0 C31.7 28.3 42.6 28.3 44.8 37.0 C47.0 28.3 57.9 28.3 59.4 37.0 C60.9 42.9 52.1 50.2 44.8 58.2Z" fill="#ba9b9f"/></g><path d="M0 0H90" stroke="#cdbdbb" stroke-width="1.4"/></svg></div>
<div class="lbl" style="left:134.5px;top:451px;width:118px"><span style="letter-spacing:-0.16px;margin-right:0.16px">heart overlay</span></div>
<div class="film" style="left:266px;top:390px"><div class="pic"><svg width="71" height="50" viewBox="0 0 71 50"><defs><filter id="x1"><feGaussianBlur stdDeviation=".35"/></filter></defs><rect width="71" height="50" fill="#020202"/><g fill="none" stroke="#191919" stroke-width=".7" filter="url(#x1)">
<path d="M2 3 L10 3 L14 2 L18 10 L16 18 L8 14 L2 12M8 14 L11 9 L14 2M16 18 L15 27 M16 18 L5 26 L2 35 L6 40 L2 49 M6 40 L9 46"/>
<path d="M24 12 L27 20 L26 25 L22 30 L18 36 L22 41 L20 48 L24 42 L22 41 M18 36 L14 42 L20 48 M27 15 L36 15 L38 16 L44 13 M26 25 L24 30"/>
<path d="M36 15 L36 26 M42 21 L36 26 L35 29 M47 25 L43 32 L48 36 L46 42 L40 44 L34 40 L30 40 M40 44 L36 50 M46 42 L47 49 M40 44 L44 38"/>
<path d="M45 2 L46 6 L44 7 M60 2 L59 9 L63 14 L58 18 L54 24 L52 16 L50 15 M59 9 L52 11 M63 14 L68 20 L66 24 M54 24 L53 30 L56 36 L54 40 L47 42 M54 40 L57 46 L54 49 M56 36 L62 40 M58 33 L70 33 M70 27 L64 30"/>
</g><path d="M52 16 L54 24 L53 28" stroke="#303030" stroke-width="1" fill="none" filter="url(#x1)"/></svg></div></div>
<div class="lbl" style="left:254.5px;top:451px;width:118px"><span style="letter-spacing:-0.47px;margin-right:0.47px">Free Plexus</span><br>Background<br><span style="letter-spacing:-0.41px;margin-right:0.41px">Overlay!</span></div>
<div class="film" style="left:386px;top:390px"><div class="pic"><svg width="71" height="50" viewBox="0 0 71 50"><rect width="71" height="50" fill="#010101"/><g fill="#2a1008"><circle cx="52" cy="46.5" r=".6"/><circle cx="47" cy="40" r=".5"/><circle cx="56" cy="34" r=".5"/><circle cx="40" cy="44" r=".5"/><circle cx="60" cy="42" r=".5"/></g></svg></div></div>
<div class="lbl" style="left:374.5px;top:451px;width:118px"><span style="letter-spacing:-0.43px;margin-right:0.43px">Fire Sparks HD.</span></div>
<div class="film" style="left:506px;top:390px"><div class="pic"><svg width="71" height="50" viewBox="0 0 71 50"><defs><linearGradient id="n1" x1="0" y1="0" x2=".75" y2="1"><stop offset="0" stop-color="#f9662a"/><stop offset=".45" stop-color="#fd9c46"/><stop offset="1" stop-color="#ffe070"/></linearGradient><linearGradient id="n2" x1="0" y1="0" x2="0" y2="1"><stop offset="0" stop-color="#f86020" stop-opacity=".25"/><stop offset="1" stop-color="#ffd060" stop-opacity=".25"/></linearGradient><filter id="n3"><feGaussianBlur stdDeviation=".8"/></filter><filter id="n4"><feGaussianBlur stdDeviation=".35"/></filter></defs><rect width="71" height="50" fill="url(#n1)"/><rect width="71" height="50" fill="url(#n2)"/>
<path d="M64.5 0 Q69.5 2 71 9 L71 0Z" fill="#3a1208" filter="url(#n3)"/><path d="M67.5 0 Q70.6 1.6 71 6 L71 0Z" fill="#120402"/>
<g filter="url(#n4)" fill="#fff"><ellipse cx="6.2" cy="15.9" rx="5.2" ry="1.5"/><ellipse cx="9.6" cy="12.6" rx=".8" ry="1.8"/><ellipse cx="0.6" cy="15.8" rx="1" ry="1.2"/><path d="M1.5 41.2 L4.5 41.6 L9 44 L12.5 47 L13.8 49.6 L11 49 L8.5 45.8 L4 43.2 L1.5 42.6Z"/></g>
<rect x="45.9" y="29.8" width="1" height="1" fill="#d04818"/></svg></div></div>
<div class="lbl" style="left:494.5px;top:451px;width:118px"><span style="letter-spacing:0.28px;margin-right:-0.28px">film burn3</span></div>
<div class="film" style="left:626px;top:390px"><div class="pic"><svg width="71" height="50" viewBox="0 0 71 50"><defs><filter id="r1"><feGaussianBlur stdDeviation=".35"/></filter></defs><rect width="71" height="50" fill="#000"/><g stroke="#a4a4a4" stroke-width=".8" stroke-linecap="round" filter="url(#r1)"><path d="M19.5 19.7L18.4 25M55.5 9.8L58.1 14.8M62.1 7.2L65.8 12.8M57.5 23L59.9 28.9"/></g></svg></div></div>
<div class="lbl" style="left:614.5px;top:451px;width:118px">burst 6 copy</div>
<svg class="abs" style="left:42px;top:507px" width="63" height="80" viewBox="0 0 63 80"><defs><linearGradient id="dg1" x1="0" y1="0" x2="1" y2="0"><stop offset="0" stop-color="#0560c0"/><stop offset=".2" stop-color="#0560c0"/><stop offset=".2" stop-color="#0a70cc"/><stop offset=".4" stop-color="#0a70cc"/><stop offset=".4" stop-color="#1590dc"/><stop offset=".6" stop-color="#1590dc"/><stop offset=".6" stop-color="#2cb0ec"/><stop offset=".8" stop-color="#2cb0ec"/><stop offset=".8" stop-color="#48d4f8"/><stop offset="1" stop-color="#48d4f8"/></linearGradient><linearGradient id="df1" x1="0" y1="0" x2="1" y2="1"><stop offset="0" stop-color="#f0f0f0"/><stop offset=".5" stop-color="#dcdcdc"/></linearGradient></defs>
<path d="M0 0H44.5L62 17.5V80H0Z" fill="#f8f8f9"/><path d="M61.5 17.5V80" stroke="#e2e2e2" stroke-width="1"/><path d="M44.5 0V17.5H62Z" fill="url(#df1)"/><path d="M44.5 0V17.5H62" fill="none" stroke="#d0d0d0" stroke-width=".6"/>
<path d="M9.5 27.2 Q9 26.2 10.2 26 L51.5 21.6 Q53 21.5 53.2 22.8 L53.6 28 Q53.6 29 52.4 29.2 L10.5 33.6Z" fill="url(#dg1)"/></svg>
<svg class="abs" style="left:162px;top:507px" width="63" height="80" viewBox="0 0 63 80"><defs><linearGradient id="dg2" x1="0" y1="0" x2="1" y2="0"><stop offset="0" stop-color="#0560c0"/><stop offset=".2" stop-color="#0560c0"/><stop offset=".2" stop-color="#0a70cc"/><stop offset=".4" stop-color="#0a70cc"/><stop offset=".4" stop-color="#1590dc"/><stop offset=".6" stop-color="#1590dc"/><stop offset=".6" stop-color="#2cb0ec"/><stop offset=".8" stop-color="#2cb0ec"/><stop offset=".8" stop-color="#48d4f8"/><stop offset="1" stop-color="#48d4f8"/></linearGradient><linearGradient id="df2" x1="0" y1="0" x2="1" y2="1"><stop offset="0" stop-color="#f0f0f0"/><stop offset=".5" stop-color="#dcdcdc"/></linearGradient></defs>
<path d="M0 0H44.5L62 17.5V80H0Z" fill="#f8f8f9"/><path d="M61.5 17.5V80" stroke="#e2e2e2" stroke-width="1"/><path d="M44.5 0V17.5H62Z" fill="url(#df2)"/><path d="M44.5 0V17.5H62" fill="none" stroke="#d0d0d0" stroke-width=".6"/>
<path d="M9.5 27.2 Q9 26.2 10.2 26 L51.5 21.6 Q53 21.5 53.2 22.8 L53.6 28 Q53.6 29 52.4 29.2 L10.5 33.6Z" fill="url(#dg2)"/></svg>
<div class="film" style="left:266px;top:537px"><div class="pic"><svg width="71" height="50" viewBox="0 0 71 50"><rect width="71" height="50" fill="#000"/></svg></div></div>
<div class="film" style="left:386px;top:537px"><div class="pic"><svg width="71" height="50" viewBox="0 0 71 50"><rect width="71" height="50" fill="#000"/></svg></div></div>
<div class="film" style="left:506px;top:537px"><div class="pic"><svg width="71" height="50" viewBox="0 0 71 50"><rect width="71" height="50" fill="#000"/></svg></div></div>
<div class="sq" style="left:627px;top:503px;width:90px;height:90px;"><svg width="90" height="90" viewBox="0 0 90 90"><defs><filter id="q1"><feGaussianBlur stdDeviation=".5"/></filter><filter id="q2"><feGaussianBlur stdDeviation="1.1"/></filter></defs><rect width="90" height="90" fill="#030003"/><g filter="url(#q2)"><path d="M-1.6999999999999993 2L42.3 46M-1.6999999999999993 46L42.3 2" stroke="#6a346a" stroke-width="1.6" opacity="0.20"/><path d="M10.4 14.1L30.2 33.9M10.4 33.9L30.2 14.1" stroke="#6a346a" stroke-width="1.6" opacity="0.27"/><path d="M32.2 -3.1999999999999993L72.2 36.8M32.2 36.8L72.2 -3.1999999999999993" stroke="#5a2c5a" stroke-width="1.6" opacity="0.20"/><path d="M43.2 7.8L61.2 25.8M43.2 25.8L61.2 7.8" stroke="#5a2c5a" stroke-width="1.6" opacity="0.27"/><path d="M48 6L96 54M48 54L96 6" stroke="#8a468a" stroke-width="3" opacity="0.23"/><path d="M61.2 19.2L82.8 40.8M61.2 40.8L82.8 19.2" stroke="#8a468a" stroke-width="3" opacity="0.30"/><path d="M1.5 17.299999999999997L33.5 49.3M1.5 49.3L33.5 17.299999999999997" stroke="#5a2c5a" stroke-width="1.6" opacity="0.18"/><path d="M10.3 26.1L24.7 40.5M10.3 40.5L24.7 26.1" stroke="#5a2c5a" stroke-width="1.6" opacity="0.24"/><path d="M31 19.799999999999997L59 47.8M31 47.8L59 19.799999999999997" stroke="#3a1c3a" stroke-width="1.6" opacity="0.18"/><path d="M38.7 27.5L51.3 40.1M38.7 40.1L51.3 27.5" stroke="#3a1c3a" stroke-width="1.6" opacity="0.24"/></g><g filter="url(#q1)"><path d="M20.3 26.2 C19.2 25.0 17.9 23.9 18.1 23.0 C18.3 21.7 20.0 21.7 20.3 23.0 C20.6 21.7 22.3 21.7 22.5 23.0 C22.7 23.9 21.4 25.0 20.3 26.2Z" fill="#f6a8f4"/><path d="M52.2 19.0 C51.1 17.8 49.8 16.7 50.0 15.8 C50.2 14.5 51.9 14.5 52.2 15.8 C52.5 14.5 54.2 14.5 54.4 15.8 C54.6 16.7 53.3 17.8 52.2 19.0Z" fill="#f0a0ee"/><path d="M72.0 35.4 C69.4 32.5 66.3 29.9 66.8 27.9 C67.3 24.7 71.2 24.7 72.0 27.9 C72.8 24.7 76.7 24.7 77.2 27.9 C77.7 29.9 74.6 32.5 72.0 35.4Z" fill="#fbb4f8"/><path d="M17.5 35.8 C16.4 34.6 15.1 33.5 15.3 32.6 C15.5 31.3 17.2 31.3 17.5 32.6 C17.8 31.3 19.5 31.3 19.7 32.6 C19.9 33.5 18.6 34.6 17.5 35.8Z" fill="#f0a0ee"/><path d="M45.0 36.4 C43.9 35.2 42.6 34.1 42.8 33.2 C43.0 31.9 44.7 31.9 45.0 33.2 C45.3 31.9 47.0 31.9 47.2 33.2 C47.4 34.1 46.1 35.2 45.0 36.4Z" fill="#a070a0"/><path d="M8.8 5.5 C8.3 5.0 7.7 4.5 7.8 4.0 C7.9 3.5 8.7 3.5 8.8 4.0 C9.0 3.5 9.7 3.5 9.8 4.0 C9.9 4.5 9.3 5.0 8.8 5.5Z" fill="#7a4a7a"/><path d="M13.5 31.4 C13.1 30.9 12.5 30.5 12.6 30.1 C12.7 29.6 13.4 29.6 13.5 30.1 C13.6 29.6 14.3 29.6 14.4 30.1 C14.5 30.5 13.9 30.9 13.5 31.4Z" fill="#8a5a8a"/></g></svg></div>
<div id="tip">نوع العنصر: ملف MP4<br><span style="transform:scaleX(.86);margin-left:-4.6px">الحجم:</span> ٣٠٫٣ ميغابايت<br>الطول: <span style="transform:scaleX(.67);font-weight:bold;margin-right:-1.3px">٠٠:٠٣:١١</span></div>
</body></html>
